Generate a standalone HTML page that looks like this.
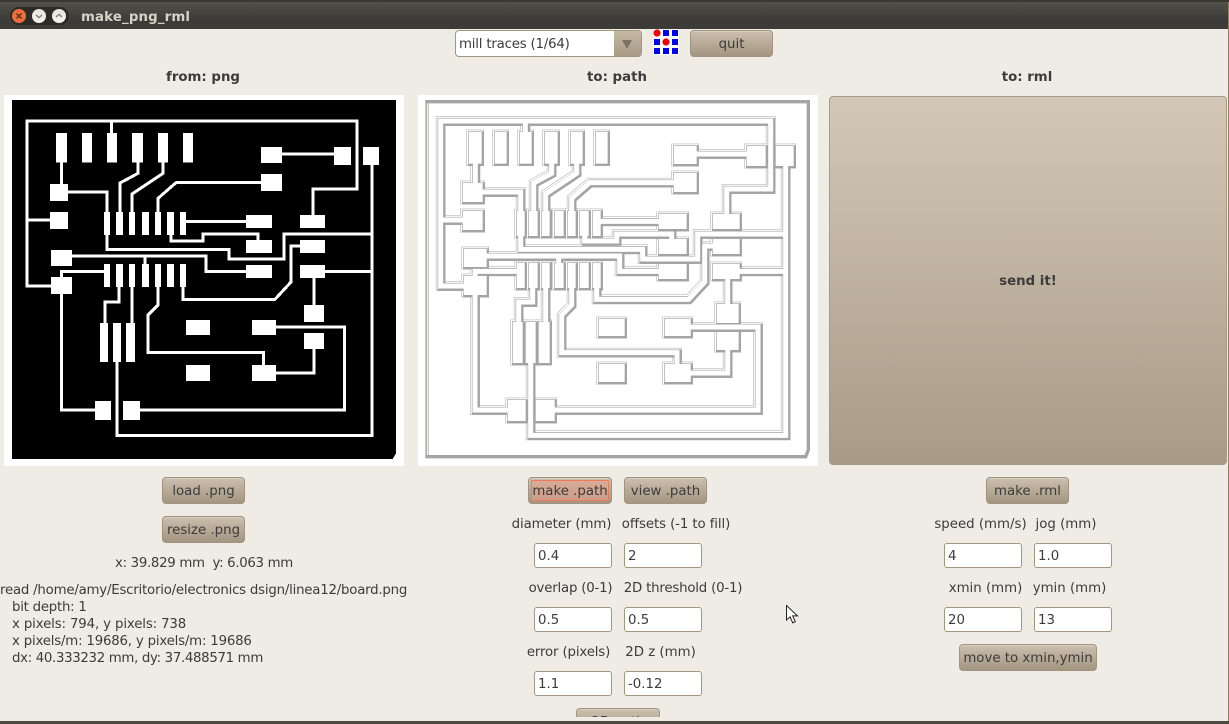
<!DOCTYPE html>
<html><head><meta charset="utf-8"><style>
html,body{margin:0;padding:0}
body{width:1229px;height:724px;overflow:hidden;position:relative;background:#efebe5;font:13.33px "DejaVu Sans","Liberation Sans",sans-serif;color:#3c3c3c}
.t{position:absolute;white-space:pre;line-height:17px;height:17px;margin-top:1px}
.c{transform:translateX(-50%)}
.b{font-weight:bold}
.btn{position:absolute;box-sizing:border-box;height:27px;border:1px solid #a1937f;border-radius:4px;background:linear-gradient(#cbbfae,#a39580);text-align:center;line-height:27px;color:#3c3c3c;box-shadow:inset 0 1px 0 #d9cfc1}
.in{position:absolute;box-sizing:border-box;width:78px;height:25px;border:1px solid #a39681;border-radius:3px;background:#fff;padding-left:3px;line-height:25px;color:#3c3c3c}
svg{position:absolute}
</style></head><body>
<div style="position:absolute;left:0;top:0;width:1229px;height:29px;background:linear-gradient(#55534c,#3c3b37 70%)"></div>
<div style="position:absolute;left:0;top:0;width:1229px;height:2px;background:#3a382f"></div>
<div style="position:absolute;left:1228px;top:2px;width:1px;height:722px;background:#8d8468"></div>
<div style="position:absolute;left:0;top:721px;width:1229px;height:3px;background:#4a4a40"></div>
<svg style="left:0;top:0" width="80" height="30">
<rect x="10" y="7" width="59" height="18" rx="9" fill="#2c2b28"/>
<defs><linearGradient id="w" x1="0" y1="0" x2="0" y2="1"><stop offset="0" stop-color="#e6e3da"/><stop offset="1" stop-color="#f5f3ee"/></linearGradient></defs>
<circle cx="19" cy="16" r="7" fill="#ee6f3c"/>
<path d="M16.5 13.5l5 5M21.5 13.5l-5 5" stroke="#5b3324" stroke-width="1.5"/>
<circle cx="39" cy="16" r="7" fill="url(#w)"/>
<path d="M36 15l3 2.6 3-2.6" stroke="#8c8a82" stroke-width="1.5" fill="none"/>
<circle cx="59" cy="16" r="7" fill="url(#w)"/>
<path d="M56 17l3-2.6 3 2.6" stroke="#8c8a82" stroke-width="1.5" fill="none"/>
</svg>
<div class="t b" style="left:81px;top:8px;color:#d6d2c6;letter-spacing:.15px">make_png_rml</div>

<div style="position:absolute;box-sizing:border-box;left:455px;top:30px;width:187px;height:27px;border:1px solid #a39681;border-radius:4px;background:#fff;overflow:hidden">
<div style="position:absolute;left:158px;top:0;width:28px;height:25px;background:linear-gradient(#c4b8a6,#a89a85)"></div>
<div style="position:absolute;left:3px;top:5px;line-height:17px;white-space:pre;letter-spacing:-.2px">mill traces (1/64)</div>
<svg style="left:165px;top:8px" width="12" height="10"><path d="M1 1h10l-5 9z" fill="#7b7264"/></svg>
</div>
<svg style="left:653px;top:29px" width="26" height="26"><rect width="26" height="26" fill="#fff"/>
<g fill="#0000f0"><rect x="10" y="1" width="6" height="6"/><rect x="19" y="1" width="6" height="6"/><rect x="1" y="10" width="6" height="6"/><rect x="19" y="10" width="6" height="6"/><rect x="1" y="19" width="6" height="6"/><rect x="10" y="19" width="6" height="6"/><rect x="19" y="19" width="6" height="6"/></g>
<circle cx="4" cy="4" r="3.6" fill="#f00000"/><circle cx="13" cy="13" r="3.6" fill="#f00000"/></svg>
<div class="btn" style="left:690px;top:30px;width:83px">quit</div>

<div class="t b c" style="left:203px;top:68px">from: png</div>
<div class="t b c" style="left:617px;top:68px">to: path</div>
<div class="t b c" style="left:1027px;top:68px">to: rml</div>

<svg style="left:0;top:90px" width="410" height="380" viewBox="0 0 1230 1140" shape-rendering="crispEdges">
<defs>
<g id="pads">
<rect x="168" y="129" width="33" height="89"/><rect x="246" y="129" width="30" height="89"/><rect x="321" y="129" width="30" height="89"/><rect x="396" y="129" width="33" height="89"/><rect x="474" y="129" width="30" height="89"/><rect x="549" y="129" width="30" height="89"/>
<rect x="783" y="171" width="63" height="48"/><rect x="1002" y="171" width="51" height="54"/><rect x="1089" y="171" width="48" height="54"/><rect x="783" y="252" width="63" height="51"/>
<rect x="150" y="282" width="54" height="51"/><rect x="150" y="366" width="54" height="51"/>
<rect x="312" y="366" width="18" height="69"/><rect x="348" y="366" width="21" height="69"/><rect x="387" y="366" width="18" height="69"/><rect x="426" y="366" width="21" height="69"/><rect x="465" y="366" width="18" height="69"/><rect x="501" y="366" width="21" height="69"/><rect x="540" y="366" width="18" height="69"/>
<rect x="738" y="375" width="78" height="39"/><rect x="900" y="375" width="75" height="39"/><rect x="738" y="450" width="78" height="39"/><rect x="900" y="450" width="75" height="39"/>
<rect x="153" y="480" width="63" height="48"/><rect x="738" y="525" width="78" height="39"/><rect x="900" y="525" width="75" height="39"/><rect x="153" y="561" width="63" height="51"/>
<rect x="312" y="522" width="18" height="69"/><rect x="348" y="522" width="21" height="69"/><rect x="387" y="522" width="18" height="69"/><rect x="426" y="522" width="21" height="69"/><rect x="465" y="522" width="18" height="69"/><rect x="501" y="522" width="21" height="69"/><rect x="540" y="522" width="18" height="69"/>
<rect x="912" y="645" width="60" height="51"/><rect x="558" y="690" width="72" height="45"/><rect x="756" y="690" width="72" height="45"/><rect x="912" y="729" width="60" height="48"/>
<rect x="300" y="699" width="24" height="117"/><rect x="339" y="699" width="24" height="117"/><rect x="378" y="699" width="27" height="117"/>
<rect x="558" y="825" width="72" height="48"/><rect x="756" y="825" width="72" height="48"/><rect x="285" y="933" width="48" height="57"/><rect x="369" y="933" width="51" height="57"/>
</g>
<g id="tr" fill="none" stroke-linejoin="miter">
<path d="M160 588H81V93H1071V297H939V380"/><path d="M335 93V130"/><path d="M81 390H155"/>
<path d="M185 215V285"/><path d="M204 306H321V478H687V507H852V432H1116"/>
<path d="M1116 220V1036H351V815"/><path d="M846 192H1005"/>
<path d="M414 215V250L360 279V370"/><path d="M489 215V250L396 312V370"/><path d="M783 278H528L474 325V370"/>
<path d="M558 394H740"/><path d="M513 430V453H609V432H774V455"/>
<path d="M216 498H618V544H740"/><path d="M435 498V525"/>
<path d="M315 544H184V960H290"/><path d="M975 544H1116"/><path d="M942 560V650"/>
<path d="M549 590V628H825L873 576V468H905"/>
<path d="M357 590V636H315V700"/><path d="M396 590V700"/>
<path d="M474 590V645L444 675V788H790V830"/><path d="M828 849H942V775"/><path d="M828 711H1033V960H415"/>
</g>
</defs>
<rect x="12" y="15" width="1200" height="1113" fill="#fff"/>
<path d="M36 30H1188V1090L1178 1107H36z" fill="#000"/>
<use href="#pads" fill="#fff"/>
<use href="#tr" stroke="#fff" stroke-width="9"/>
</svg>

<svg style="left:415px;top:90px" width="410" height="380" viewBox="0 0 1230 1140">
<defs><filter id="bl" filterUnits="userSpaceOnUse" x="0" y="0" width="1230" height="1140"><feGaussianBlur stdDeviation="1"/></filter></defs>
<rect x="9" y="15" width="1200" height="1113" fill="#fff"/>
<g filter="url(#bl)">
<path d="M36 35H1180V1080L1172 1100H36z" fill="none" stroke="#a4a4a4" stroke-width="10"/>
<rect x="35.5" y="40" width="3" height="1055" fill="#fff"/>
<g transform="translate(-4,0)">
<use href="#pads" fill="#a4a4a4" stroke="#a4a4a4" stroke-width="20"/><use href="#tr" stroke="#a4a4a4" stroke-width="29"/>
<use href="#pads" fill="#fff" stroke="#fff" stroke-width="17"/><use href="#tr" stroke="#fff" stroke-width="26"/>
<g transform="translate(2.5,2.5)"><use href="#pads" fill="#a4a4a4" stroke="#a4a4a4" stroke-width="15"/><use href="#tr" stroke="#a4a4a4" stroke-width="24"/></g>
<use href="#pads" fill="#fff" stroke="#fff" stroke-width="6"/><use href="#tr" stroke="#fff" stroke-width="15"/>
</g>
</g>
</svg>

<div style="position:absolute;box-sizing:border-box;left:829px;top:96px;width:398px;height:369px;border:1px solid #a79b87;border-radius:4px;background:linear-gradient(#d3c8b8,#a89a86)"></div>
<div class="t b c" style="left:1028px;top:272px">send it!</div>

<div class="btn" style="left:162px;top:477px;width:83px">load .png</div>
<div class="btn" style="left:162px;top:516px;width:83px">resize .png</div>
<div class="t c" style="left:204px;top:554px;letter-spacing:-.32px">x: 39.829 mm  y: 6.063 mm</div>
<div class="t" style="left:0;top:581px;letter-spacing:-.22px">read /home/amy/Escritorio/electronics dsign/linea12/board.png</div>
<div class="t" style="left:12px;top:598px;letter-spacing:-.25px">bit depth: 1</div>
<div class="t" style="left:12px;top:615px;letter-spacing:-.14px">x pixels: 794, y pixels: 738</div>
<div class="t" style="left:12px;top:632px;letter-spacing:-.2px">x pixels/m: 19686, y pixels/m: 19686</div>
<div class="t" style="left:12px;top:649px;letter-spacing:-.33px">dx: 40.333232 mm, dy: 37.488571 mm</div>

<div class="btn" style="left:528px;top:477px;width:84px">
<div style="position:absolute;left:2px;top:2px;right:2px;bottom:2px;border:1px solid #ee7a5e;border-radius:2px;background:linear-gradient(#d8ac98,#cc9c87)"></div><span style="position:relative">make .path</span></div>
<div class="btn" style="left:624px;top:477px;width:83px">view .path</div>
<div class="t c" style="left:561.5px;top:515px;letter-spacing:-.1px">diameter (mm)</div>
<div class="t c" style="left:676px;top:515px;letter-spacing:-.1px">offsets (-1 to fill)</div>
<div class="in" style="left:534px;top:543px">0.4</div><div class="in" style="left:624px;top:543px">2</div>
<div class="t c" style="left:570.5px;top:579px;letter-spacing:-.2px">overlap (0-1)</div>
<div class="t c" style="left:683px;top:579px;letter-spacing:-.2px">2D threshold (0-1)</div>
<div class="in" style="left:534px;top:607px">0.5</div><div class="in" style="left:624px;top:607px">0.5</div>
<div class="t c" style="left:568.5px;top:643px;letter-spacing:-.15px">error (pixels)</div>
<div class="t c" style="left:660.5px;top:643px">2D z (mm)</div>
<div class="in" style="left:534px;top:671px">1.1</div><div class="in" style="left:624px;top:671px">-0.12</div>
<div style="position:absolute;left:576px;top:708px;width:84px;height:9px;overflow:hidden"><div class="btn" style="left:0;top:0;width:84px">2D path</div></div>

<div class="btn" style="left:986px;top:477px;width:83px">make .rml</div>
<div class="t c" style="left:980.5px;top:515px">speed (mm/s)</div>
<div class="t c" style="left:1066px;top:515px">jog (mm)</div>
<div class="in" style="left:944px;top:543px">4</div><div class="in" style="left:1034px;top:543px">1.0</div>
<div class="t c" style="left:985.5px;top:579px">xmin (mm)</div>
<div class="t c" style="left:1069.5px;top:579px">ymin (mm)</div>
<div class="in" style="left:944px;top:607px">20</div><div class="in" style="left:1034px;top:607px">13</div>
<div class="btn" style="left:959px;top:644px;width:138px">move to xmin,ymin</div>

<svg style="left:784px;top:603px" width="18" height="24"><path d="M2.5 2.5V17l3.6-3.2 2.6 6 2.6-1.1-2.6-5.8h4.8z" fill="#fff" stroke="#222" stroke-width="1"/></svg>
</body></html>
